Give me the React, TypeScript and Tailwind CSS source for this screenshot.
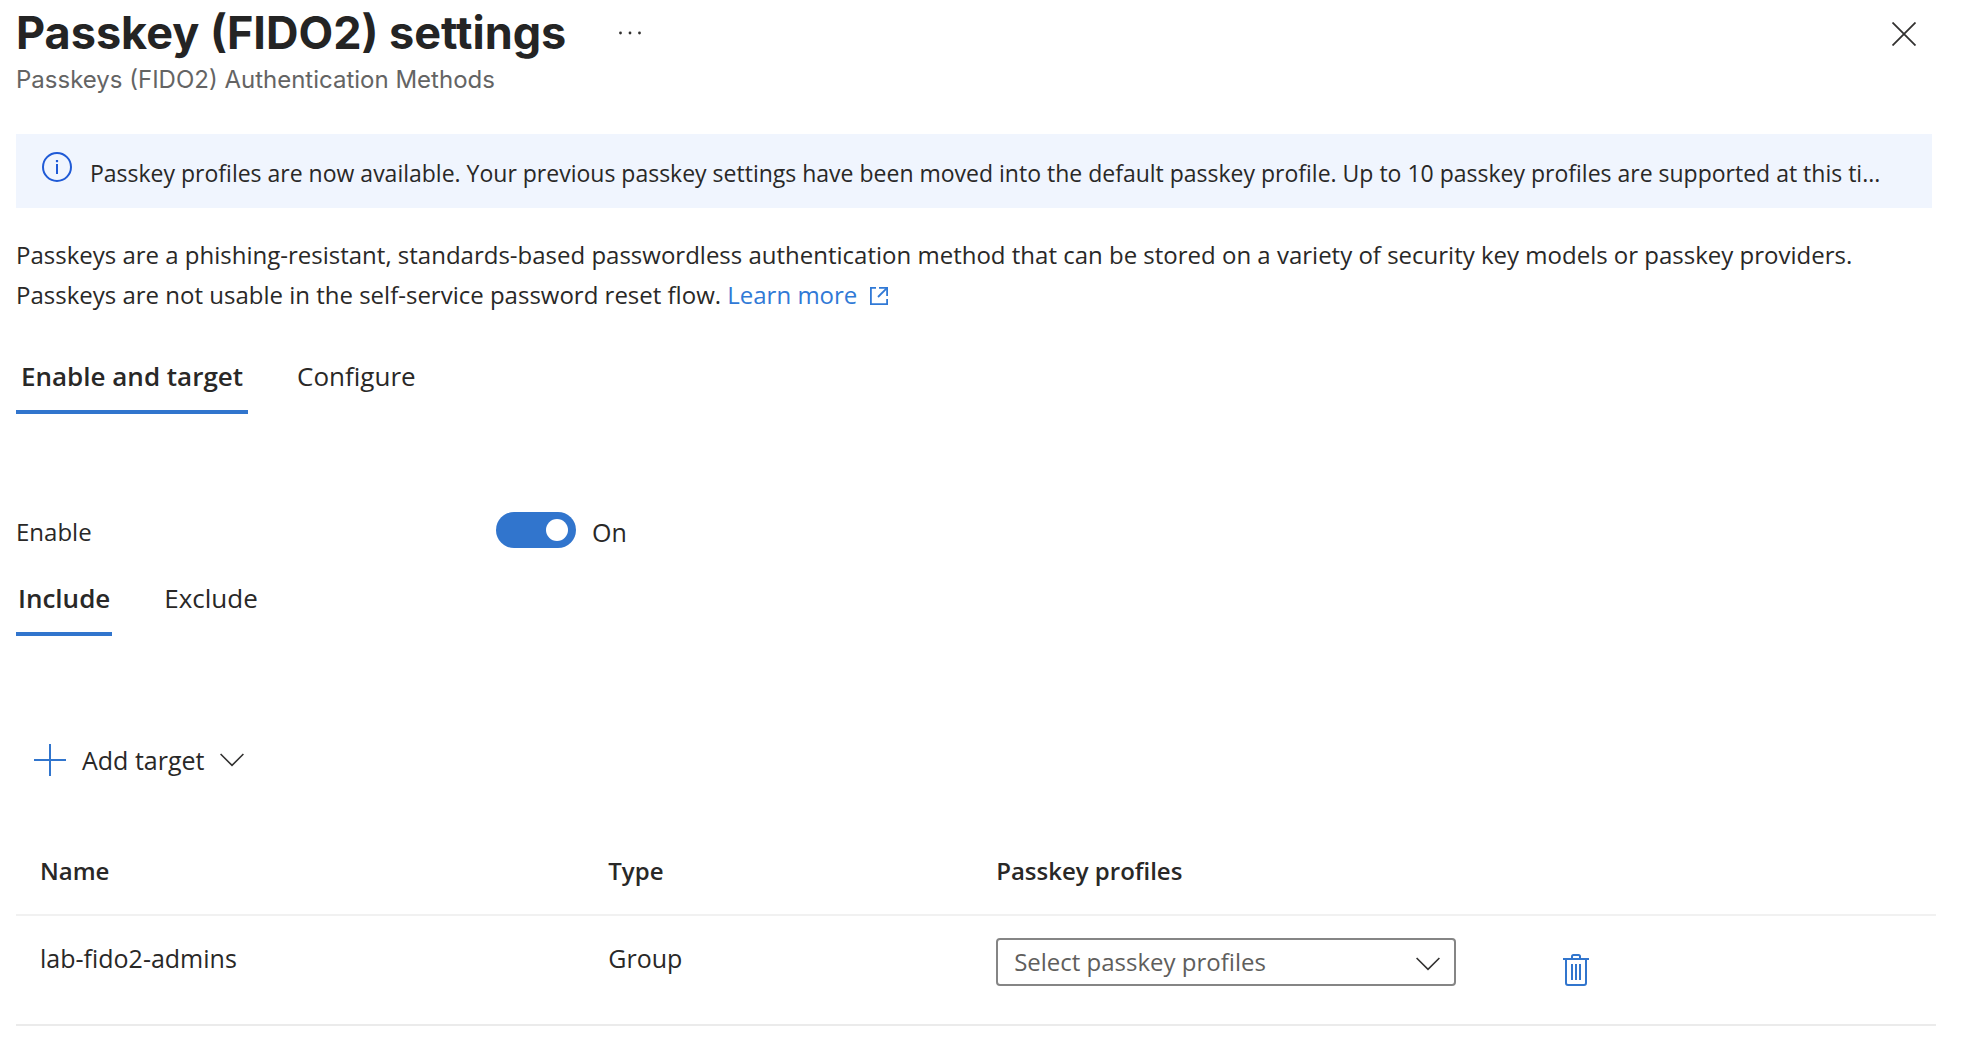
import { useId, useState } from "react";

function CloseIcon() {
  return (
    <svg className="size-6" viewBox="0 0 24 24" fill="none" stroke="#323130" strokeWidth="1.8" aria-hidden="true">
      <path d="M0.5 0.5 23.5 23.5M23.5 0.5 0.5 23.5" />
    </svg>
  );
}

function MoreIcon() {
  return (
    <svg className="size-6" viewBox="0 0 24 24" fill="#323130" aria-hidden="true">
      <circle cx="2.5" cy="12" r="1.4" />
      <circle cx="12" cy="12" r="1.4" />
      <circle cx="21.5" cy="12" r="1.4" />
    </svg>
  );
}

function InfoIcon() {
  return (
    <svg className="size-[30px] shrink-0" viewBox="0 0 30 30" fill="none" stroke="#1f5ad6" strokeWidth="2" aria-hidden="true">
      <circle cx="15" cy="15" r="14" />
      <path d="M15 12v10" />
      <path d="M15 8v2.2" strokeWidth="2.2" />
    </svg>
  );
}

function ExternalIcon() {
  return (
    <svg className="ml-3 inline-block size-5 align-[-2px]" viewBox="0 0 20 20" fill="none" stroke="currentColor" strokeWidth="1.8" aria-hidden="true">
      <path d="M7 1.9H1.9v16.2h16.2V13" />
      <path d="M10 1.9h8.1V10" />
      <path d="M18.1 1.9 9 11" />
    </svg>
  );
}

function PlusIcon() {
  return (
    <svg className="size-8" viewBox="0 0 32 32" fill="none" stroke="#3175cd" strokeWidth="2" aria-hidden="true">
      <path d="M16 0v32M0 16h32" />
    </svg>
  );
}

function ChevronIcon({ className = "" }: { className?: string }) {
  return (
    <svg className={`h-[14px] w-6 ${className}`} viewBox="0 0 24 14" fill="none" stroke="#323130" strokeWidth="1.6" aria-hidden="true">
      <path d="M0.6 1 12 12.4 23.4 1" />
    </svg>
  );
}

function TrashIcon() {
  return (
    <svg className="h-8 w-[26px]" viewBox="0 0 26 32" fill="none" stroke="#3175cd" strokeWidth="2" aria-hidden="true">
      <path d="M0 5h26" />
      <path d="M9 5V2.5A1.5 1.5 0 0 1 10.5 1h5A1.5 1.5 0 0 1 17 2.5V5" />
      <path d="M3 5v24a2 2 0 0 0 2 2h16a2 2 0 0 0 2-2V5" />
      <path d="M9 10v16M13 10v16M17 10v16" />
    </svg>
  );
}

function Tabs({ items, label, gap, pad }: { items: string[]; label: string; gap: string; pad: string }) {
  const [active, setActive] = useState(items[0]);
  return (
    <div role="tablist" aria-label={label} className={`flex items-start ${gap}`}>
      {items.map((item) => (
        <button
          key={item}
          type="button"
          role="tab"
          aria-selected={item === active}
          onClick={() => setActive(item)}
          className={`border-b-4 pb-[18px] text-[26px] leading-8 ${pad} ${
            item === active ? "border-[#3175cd] font-semibold" : "border-transparent"
          }`}
        >
          {item}
        </button>
      ))}
    </div>
  );
}

export default function App() {
  const [enabled, setEnabled] = useState(true);
  const enableId = useId();

  return (
    <main className="min-h-screen bg-white pr-7 pb-5 pl-4 font-['Open_Sans','Noto_Sans',sans-serif] text-[24px] text-[#292827]">
      <header className="flex items-start justify-between pt-[5px] font-[Inter,sans-serif]">
        <div>
          <div className="flex items-center gap-[52px]">
            <h1 className="text-[45px] leading-[56px] font-bold text-[#242424]">Passkey (FIDO2) settings</h1>
            <button type="button" aria-label="More actions">
              <MoreIcon />
            </button>
          </div>
          <p className="mt-[3px] leading-8 text-[#646464]">Passkeys (FIDO2) Authentication Methods</p>
        </div>
        <button type="button" aria-label="Close" className="mt-[17px] mr-5">
          <CloseIcon />
        </button>
      </header>

      <div role="status" className="mt-[38px] mr-1 flex min-h-[74px] items-start gap-[18px] bg-[#f0f5fe] pt-[18px] pr-6 pl-[26px]">
        <InfoIcon />
        <p className="min-w-0 truncate pt-[5px] text-[23px] leading-8">
          Passkey profiles are now available. Your previous passkey settings have been moved into the default passkey
          profile. Up to 10 passkey profiles are supported at this ti...
        </p>
      </div>

      <p className="mt-[27px] leading-10">
        Passkeys are a phishing-resistant, standards-based passwordless authentication method that can be stored on a
        variety of security key models or passkey providers. Passkeys are not usable in the self-service password reset
        flow.{" "}
        <a href="#learn-more" className="text-[#3079d6]">
          Learn more
          <ExternalIcon />
        </a>
      </p>

      <div className="mt-[45px]">
        <Tabs label="Settings" items={["Enable and target", "Configure"]} gap="gap-11" pad="px-[5px]" />
      </div>

      <div className="mt-[98px] flex items-start leading-10">
        <label htmlFor={enableId} className="w-[480px]">
          Enable
        </label>
        <input
          id={enableId}
          type="checkbox"
          role="switch"
          checked={enabled}
          onChange={(e) => setEnabled(e.target.checked)}
          className="flex h-9 w-20 appearance-none items-center rounded-full bg-[#8a8886] px-2 before:size-[22px] before:rounded-full before:bg-white checked:justify-end checked:bg-[#3175cd]"
        />
        <span className="ml-4 text-[25px]">{enabled ? "On" : "Off"}</span>
      </div>

      <div className="mt-[30px]">
        <Tabs label="Targets" items={["Include", "Exclude"]} gap="gap-[50px]" pad="px-0.5" />
      </div>

      <button type="button" className="mt-[106px] ml-[18px] flex items-center gap-4 text-[25px] leading-9">
        <PlusIcon />
        Add target
        <ChevronIcon />
      </button>

      <table className="mt-[54px] w-full table-fixed border-separate border-spacing-0 text-left">
        <thead>
          <tr className="leading-8 *:border-b-2 *:border-[#f1f1f1] *:px-6 *:pt-[23px] *:pb-[27px] *:font-semibold">
            <th className="w-[29.6%]">Name</th>
            <th className="w-[20.2%]">Type</th>
            <th className="w-[29.5%]">Passkey profiles</th>
            <th aria-label="Actions" />
          </tr>
        </thead>
        <tbody>
          <tr className="align-top text-[25px] leading-8 *:border-b-2 *:border-[#ebebeb] *:px-6 *:pb-[38px]">
            <td className="pt-[26px]">lab-fido2-admins</td>
            <td className="pt-[26px]">Group</td>
            <td className="pt-[22px]">
              <div className="relative max-w-[460px]">
                <select
                  aria-label="Passkey profiles"
                  defaultValue=""
                  className="block h-12 w-full appearance-none rounded-[4px] border-2 border-[#858585] bg-white px-4 text-[24px] text-[#605e5c]"
                >
                  <option value="">Select passkey profiles</option>
                </select>
                <ChevronIcon className="pointer-events-none absolute top-[19px] right-4" />
              </div>
            </td>
            <td className="pt-[38px]">
              <button type="button" aria-label="Delete target" className="block">
                <TrashIcon />
              </button>
            </td>
          </tr>
        </tbody>
      </table>
    </main>
  );
}
